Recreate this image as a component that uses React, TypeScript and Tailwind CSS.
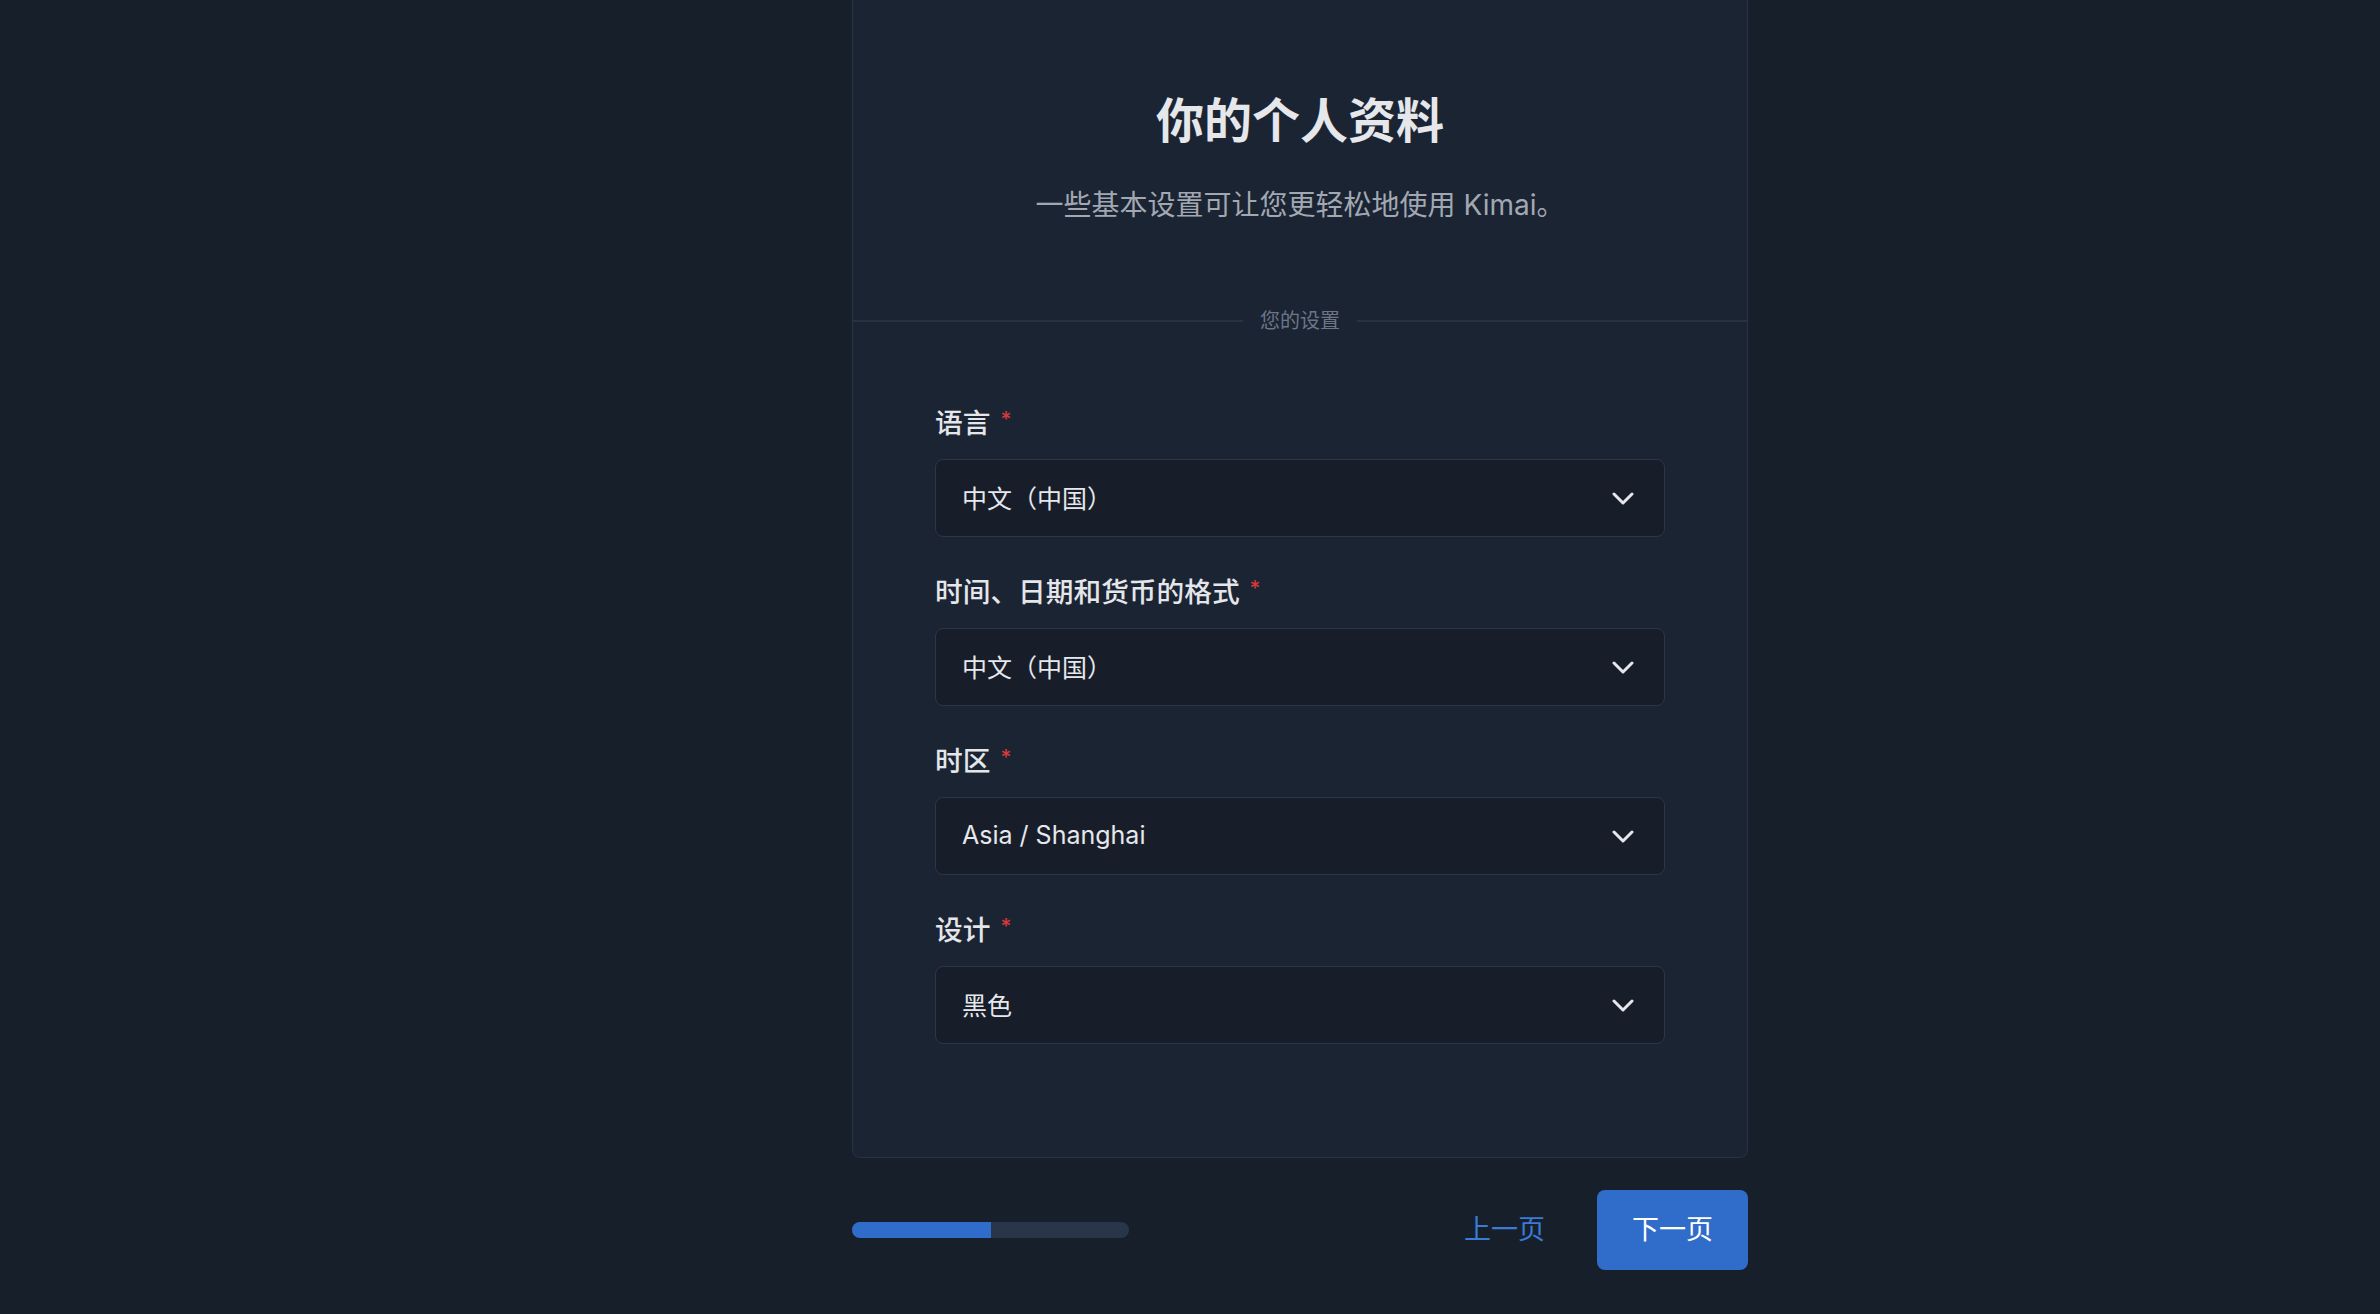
import { useState } from 'react';

interface Field {
  label: string;
  value: string;
  cjk: boolean;
}

const fields: Field[] = [
  { label: '语言', value: '中文（中国）', cjk: true },
  { label: '时间、日期和货币的格式', value: '中文（中国）', cjk: true },
  { label: '时区', value: 'Asia / Shanghai', cjk: false },
  { label: '设计', value: '黑色', cjk: true },
];

function Chevron() {
  return (
    <svg width="22" height="13" viewBox="0 0 22 13" fill="none" className="shrink-0">
      <path d="M2 2 L11 11 L20 2" stroke="#e5e7eb" strokeWidth="3" strokeLinecap="round" strokeLinejoin="round" />
    </svg>
  );
}

function SelectField({ label, value, cjk }: Field) {
  return (
    <div className="flex flex-col">
      <label className="h-9 leading-9 text-[27.7px] font-medium text-[#e4e6ea] flex items-center mb-[18px]">
        {label}
        <span className="ml-[10px] text-[21px] text-[#d63939] self-start leading-[30px]">*</span>
      </label>
      <button className="h-[78px] w-full flex items-center justify-between pl-[26px] pr-[30px] bg-[#171e2a] border border-[#2b3649] rounded-lg text-left">
        <span
          className={
            cjk
              ? "text-[25px] text-[#e6e8ec] font-['Noto_Sans_CJK_SC',sans-serif] [text-spacing-trim:space-all] [font-feature-settings:'chws'_0,'halt'_0,'fwid'_1]"
              : 'text-[25px] text-[#e6e8ec]'
          }
        >
          {value}
        </span>
        <Chevron />
      </button>
    </div>
  );
}

export default function App() {
  const [step] = useState(1);

  return (
    <div
      className="min-h-screen bg-[#171f2b] flex justify-center pl-[220px]"
      style={{ fontFamily: 'Inter, "Noto Sans CJK SC", sans-serif' }}
    >
      <div className="w-[896px]">
        <div className="bg-[#1b2433] border border-t-0 border-[#273245] rounded-b-lg pb-[113px]">
          <div className="pt-[91px] flex flex-col items-center">
            <h2 className="text-[48px] leading-[60px] font-semibold text-[#e5e7eb]">你的个人资料</h2>
            <p className="mt-[34px] text-[28px] leading-10 text-[#a2a8b2]">一些基本设置可让您更轻松地使用 Kimai。</p>
          </div>

          <div className="mt-[82px] flex items-center">
            <div className="flex-1 h-[2px] bg-[#263142]" />
            <span className="px-[17px] text-[20px] leading-7 text-[#6c7686]">您的设置</span>
            <div className="flex-1 h-[2px] bg-[#263142]" />
          </div>

          <div className="mt-[70px] px-[82px] flex flex-col gap-[37px]">
            {fields.map((f) => (
              <SelectField key={f.label} {...f} />
            ))}
          </div>
        </div>

        <div className="mt-[32px] flex items-center justify-between">
          <div className="w-[277px] h-4 rounded-full bg-[#29364a] overflow-hidden">
            <div className="h-full bg-[#306cca]" style={{ width: `${step * 50}%` }} />
          </div>
          <div className="flex items-center gap-[52px]">
            <button className="text-[27px] text-[#3a7bd6]">上一页</button>
            <button className="w-[151px] h-20 rounded-lg bg-[#306cca] text-[27px] text-white">下一页</button>
          </div>
        </div>
      </div>
    </div>
  );
}
